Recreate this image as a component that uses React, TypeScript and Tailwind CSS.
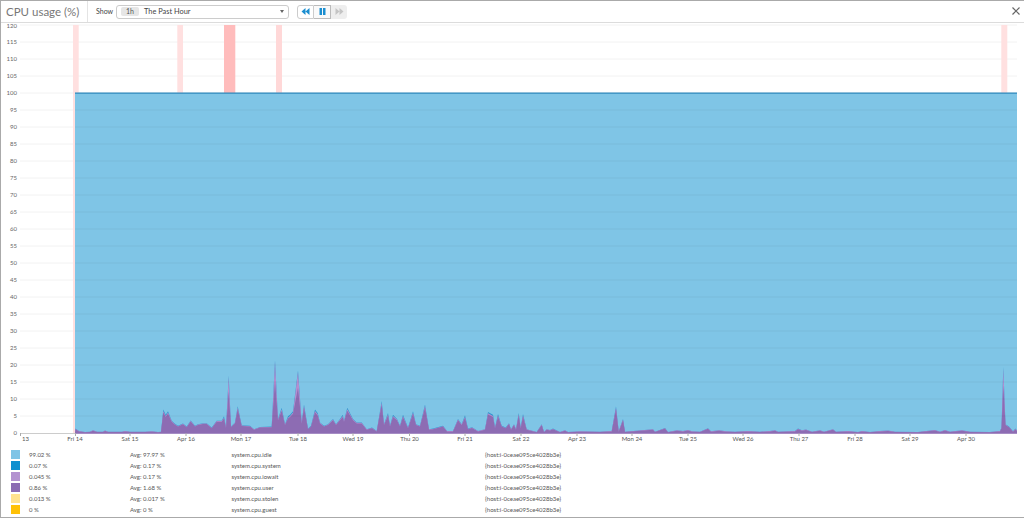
const font = "[font-family:Lato,'Open_Sans',sans-serif]"

const Y0 = 433
const PX_PER_UNIT = 3.4

// hand-traced from the reference: [x, value in %]
const points: [number, number][] = [
  [75, 0], [75.5, 1.2], [79, 0.5], [85, 0.2], [90, 0.3], [93, 0.7], [97, 0.3], [103, 0.3], [105, 0.6], [108, 0.3],
  [122, 0.3], [125, 0.5], [130, 0.3], [145, 0.3], [152, 0.4], [158, 0.2], [161, 0.3], [163.3, 6.5], [165.7, 5],
  [168, 6], [171.7, 3.5], [175, 2.6], [178, 2], [183, 2.7], [186.7, 1.8], [190.7, 3.6], [195, 2], [198, 2.5],
  [203, 2.8], [206.7, 2.8], [211.7, 1.5], [216.7, 3.5], [221.7, 3.5], [224, 4.5], [226, 1.6], [228.7, 16.5],
  [231, 1.8], [235, 3], [237.7, 7.5], [241.7, 2.2], [250, 2], [254, 1], [260, 1.7], [271.7, 1.8], [275, 21],
  [278, 4], [281.7, 7], [285, 2.5], [288, 4.5], [290, 5], [293, 6], [298, 18], [301.7, 3], [304, 8], [308, 1.2],
  [311, 2], [315, 6.5], [317.7, 5.5], [320, 3], [324, 2], [328, 2.5], [333, 4], [336, 2.5], [340, 4], [342.7, 5],
  [344, 3.5], [347.3, 7], [353, 4], [356.7, 3], [361.7, 3], [366.7, 1], [372, 1.5], [376.7, 0.5], [381.7, 9],
  [384, 2.5], [388, 5.5], [390, 2], [393, 5], [397, 4], [400, 2], [403, 5], [408, 1.5], [413, 6], [416, 2.5],
  [420, 2], [425, 8], [429, 1], [433, 1.2], [443, 2], [447, 0.5], [453, 0.5], [458, 4], [461.7, 2.5], [465, 4.8],
  [468, 1.2], [472, 1.6], [478, 0.5], [485, 1], [488, 5.8], [493, 5], [495, 1.5], [498, 5.2], [501.7, 2],
  [505.7, 1.5], [509, 2.8], [511, 1], [514, 2.5], [516, 1], [518.7, 5.5], [520.7, 1.5], [523, 5.2], [526.7, 1],
  [536.7, 0.2], [541.7, 2.5], [544, 0.2], [546.7, 1], [550, 0.8], [553, 1.2], [560, 0.2], [565, 0.7], [568, 0.2],
  [580, 0.4], [600, 0.3], [611.7, 0.5], [616, 7.5], [618.7, 0.4], [623, 4], [625, 0.3], [653, 1], [655, 0.3],
  [665, 1.4], [668, 0.2], [677, 0.7], [683, 0.5], [688, 0.8], [692, 0.4], [700, 0.3], [708, 1.3], [711, 0.4],
  [719, 0.7], [726, 0.4], [735, 0.3], [748, 0.5], [760, 0.3], [770, 0.5], [775, 0.7], [778, 0.3], [795, 0.5],
  [798, 1.2], [802, 0.7], [806, 0.9], [812, 0.3], [820, 0.7], [824, 0.3], [833, 1], [836, 0.3], [848, 0.5],
  [858, 0.2], [862, 0.5], [870, 0.2], [880, 0.5], [888, 0.6], [895, 0.3], [918, 0.2], [935, 0.8], [940, 0.3],
  [945, 0.8], [950, 0.3], [962, 0.7], [970, 0.3], [990, 0.2], [1000, 0.5], [1001.5, 1.5], [1003.3, 19],
  [1005.5, 2.5], [1009, 1.8], [1013, 0.4], [1015.5, 1.2], [1017, 0.6], [1017, 0],
]

const areaPath = (scale: (v: number) => number) =>
  "M" + points.map(([x, v]) => `${x} ${Y0 - scale(v) * PX_PER_UNIT}`).join("L") + "Z"

const yLabels = Array.from({ length: 25 }, (_, i) => i * 5)

const xLabels: [number, string][] = [
  [130, "Sat 15"], [186, "Apr 16"], [241, "Mon 17"], [298, "Tue 18"], [353, "Wed 19"], [409.5, "Thu 20"],
  [465, "Fri 21"], [521, "Sat 22"], [577, "Apr 23"], [632, "Mon 24"], [688, "Tue 25"], [743, "Wed 26"],
  [799, "Thu 27"], [855, "Fri 28"], [910, "Sat 29"], [966, "Apr 30"],
]

const bands = [
  { x: 73, w: 5.7, fill: "#ffe0e0" },
  { x: 177.3, w: 5.7, fill: "#ffe0e0" },
  { x: 224, w: 11.3, fill: "#ffbcbc" },
  { x: 276, w: 6, fill: "#ffd8d8" },
  { x: 1001.3, w: 6, fill: "#ffe0e0" },
]

const legend = [
  { swatch: "bg-[#7fc4e6]", value: "99.02 %", avg: "97.97 %", metric: "system.cpu.idle" },
  { swatch: "bg-[#0f90cf]", value: "0.07 %", avg: "0.17 %", metric: "system.cpu.system" },
  { swatch: "bg-[#b392d0]", value: "0.045 %", avg: "0.17 %", metric: "system.cpu.iowait" },
  { swatch: "bg-[#8c6cb3]", value: "0.86 %", avg: "1.68 %", metric: "system.cpu.user" },
  { swatch: "bg-[#ffe28f]", value: "0.013 %", avg: "0.017 %", metric: "system.cpu.stolen" },
  { swatch: "bg-[#ffc107]", value: "0 %", avg: "0 %", metric: "system.cpu.guest" },
]

function Chart() {
  return (
    <svg viewBox="1 23 1023 422" className="block w-[1023px] h-[422px] shrink-0">
      {yLabels.map((v) => (
        <g key={v}>
          {v > 0 && <line x1="20" x2="1017" y1={Y0 - v * PX_PER_UNIT} y2={Y0 - v * PX_PER_UNIT} stroke="#f2f2f2" strokeWidth="1" />}
          <text x="17" y={Y0 - v * PX_PER_UNIT + (v === 120 ? 3 : 2.2)} textAnchor="end" fontSize="6" fill="#666" fontFamily="Lato, sans-serif">
            {v}
          </text>
        </g>
      ))}

      {bands.map((b) => (
        <rect key={b.x} x={b.x} y="25" width={b.w} height="68" fill={b.fill} />
      ))}
      <rect x="73" y="93" width="2" height="340" fill="#ffe0e0" />

      {/* stacked series */}
      <rect x="75" y="93" width="942" height="340" fill="#7fc5e6" />
      <rect x="75" y="92.5" width="942" height="1.2" fill="#2a85ba" />
      <path d={areaPath((v) => (v > 4 ? v + 0.4 : v + 0.1))} fill="#2f98d0" />
      <path d={areaPath((v) => (v > 1 ? v : v + 0.1))} fill="#b48fd0" />
      <path d={areaPath((v) => (v > 9 ? v * 0.74 : v * 0.94))} fill="#8d6cb3" />

      {/* grid lines show through the fill */}
      {yLabels.filter((v) => v > 0 && v < 100).map((v) => (
        <line key={v} x1="75" x2="1017" y1={Y0 - v * PX_PER_UNIT} y2={Y0 - v * PX_PER_UNIT} stroke="#000" strokeOpacity="0.05" strokeWidth="1" />
      ))}

      {/* x axis */}
      <line x1="20" x2="75" y1="433.5" y2="433.5" stroke="#ccc" strokeWidth="1" />
      <line x1="75" x2="1017" y1="433.5" y2="433.5" stroke="#a58cc4" strokeWidth="1" />
      <line x1="20.5" x2="20.5" y1="433" y2="436" stroke="#aaa" strokeWidth="1" />
      <line x1="75.5" x2="75.5" y1="433" y2="436" stroke="#aaa" strokeWidth="1" />
      <text x="22" y="441" fontSize="6" fill="#555" fontFamily="Lato, sans-serif">13</text>
      <text x="75" y="441" textAnchor="middle" fontSize="6" fill="#555" fontFamily="Lato, sans-serif">Fri 14</text>
      {xLabels.map(([x, label]) => (
        <g key={label}>
          <line x1={x} x2={x} y1="433" y2="436" stroke="#aaa" strokeWidth="1" />
          <text x={x} y="441" textAnchor="middle" fontSize="6" fill="#555" fontFamily="Lato, sans-serif">
            {label}
          </text>
        </g>
      ))}
    </svg>
  )
}

function Header() {
  return (
    <div className="flex items-stretch h-[22px] shrink-0 border-b border-[#dcdcdc]">
      <div className="w-[87px] shrink-0 border-r border-[#e4e4e4] pl-[5px] text-[11.5px] leading-[21px] text-[#777] whitespace-nowrap">
        CPU usage (%)
      </div>
      <div className="flex items-center pl-[8px] text-[7px] text-[#444]">
        <span className="w-[20px]">Show</span>
        <div className="flex items-center w-[173px] h-[14px] border border-[#ccc] rounded-[3px] pl-[4px] pr-[4px]">
          <span className="px-[5px] h-[9px] leading-[9px] bg-[#e6e6e6] rounded-[2px] text-[7px] text-[#555]">1h</span>
          <span className="ml-[5px] text-[7.4px] text-[#444]">The Past Hour</span>
          <span className="ml-auto w-0 h-0 border-x-[2px] border-x-transparent border-t-[3px] border-t-[#666]" />
        </div>
        <div className="flex items-stretch ml-[8px] h-[14px]">
          <button className="w-[17px] flex items-center justify-center border border-[#ccc] rounded-l-[3px]">
            <svg width="9" height="7" viewBox="0 0 9 7">
              <path d="M4.5 0v7L0.5 3.5zM8.5 0v7L4.5 3.5z" fill="#1b8ed0" />
            </svg>
          </button>
          <button className="w-[17px] flex items-center justify-center border-y border-r border-[#bbb] bg-[#fafafa]">
            <svg width="7" height="7" viewBox="0 0 7 7">
              <path d="M0.5 0h2.5v7H0.5zM4 0h2.5v7H4z" fill="#1b8ed0" />
            </svg>
          </button>
          <button className="w-[16px] flex items-center justify-center bg-[#eeeeee] rounded-r-[3px]">
            <svg width="9" height="7" viewBox="0 0 9 7">
              <path d="M0.5 0v7L4.5 3.5zM4.5 0v7L8.5 3.5z" fill="#c4c4c4" />
            </svg>
          </button>
        </div>
      </div>
      <button className="ml-auto mr-[2px] w-[12px] flex items-center justify-center pb-[2px]">
        <svg width="8" height="8" viewBox="0 0 8 8">
          <path d="M0.5 0.5l7 7M7.5 0.5l-7 7" stroke="#666" strokeWidth="1.2" />
        </svg>
      </button>
    </div>
  )
}

function Legend() {
  return (
    <div className="flex flex-col pl-[10px] pt-[4px] text-[6px] leading-[11px] text-[#555]">
      {legend.map((row) => (
        <div key={row.metric} className="flex items-center h-[11px]">
          <span className={`w-[9px] h-[9px] shrink-0 ${row.swatch}`} />
          <span className="ml-[9px] w-[101px]">{row.value}</span>
          <span className="w-[101.5px]">Avg: {row.avg}</span>
          <span className="w-[253.5px]">{row.metric}</span>
          <span>{"{host:i-0ceae095ce4028b3e}"}</span>
        </div>
      ))}
    </div>
  )
}

export default function App() {
  return (
    <div className={`w-[1024px] h-[518px] bg-white border-t border-l border-b border-[#aaa] flex flex-col overflow-hidden ${font}`}>
      <Header />
      <Chart />
      <Legend />
    </div>
  )
}
